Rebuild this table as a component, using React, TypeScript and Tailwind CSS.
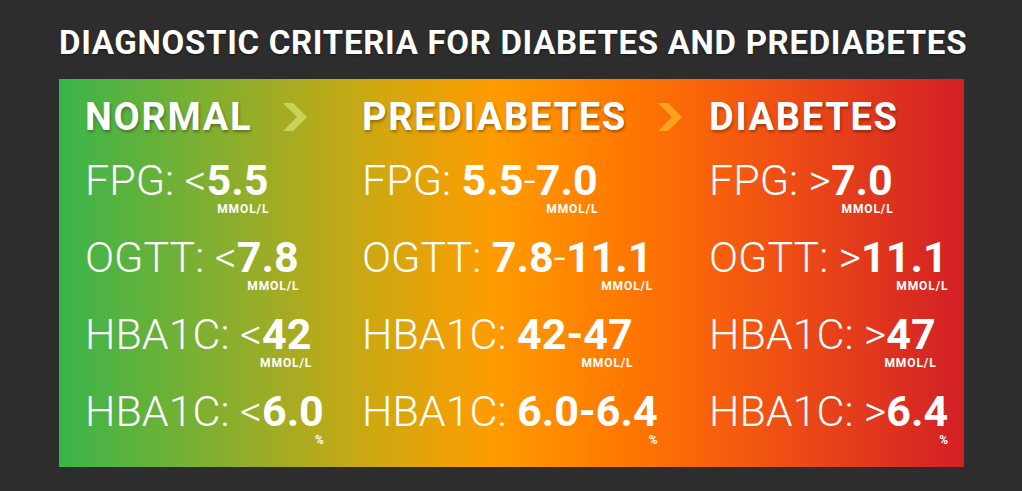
import React from "react";

type Row = { label: string; cmp?: string; value: React.ReactNode; unit: string };

const font = { fontFamily: "Roboto, 'Liberation Sans', sans-serif" };

function Chevron({ color }: { color: string }) {
  return (
    <svg width="24" height="28" viewBox="0 0 24 28" className="shrink-0">
      <polygon points="0,0 10,0 24,14 10,28 0,28 14,14" fill={color} />
    </svg>
  );
}

function Line({ row }: { row: Row }) {
  return (
    <div className="h-[77px] text-white">
      <div className="inline-flex flex-col items-end">
        <div className="flex items-baseline text-[43px] leading-none whitespace-pre">
          <span className="font-light">{row.label}</span>
          {row.cmp && <span className="font-light">{row.cmp}</span>}
          <span className="font-bold">{row.value}</span>
        </div>
        <div className="mt-[1px] text-[12px] leading-none font-bold tracking-[0.9px] mr-[-0.9px]">
          {row.unit}
        </div>
      </div>
    </div>
  );
}

function Column({
  title,
  chevron,
  rows,
}: {
  title: string;
  chevron?: string;
  rows: Row[];
}) {
  return (
    <div className="flex flex-col">
      <div className="flex items-center gap-[31px] h-[38px] mb-[23px]">
        <div className="text-[38px] leading-none font-bold tracking-[1.7px] text-white [text-shadow:1px_2px_3px_rgba(0,0,0,0.35)]">
          {title}
        </div>
        {chevron && <Chevron color={chevron} />}
      </div>
      {rows.map((r, i) => (
        <Line key={i} row={r} />
      ))}
    </div>
  );
}

const thin = (s: string) => <span className="font-light">{s}</span>;

export default function App() {
  return (
    <div className="w-[1022px] h-[491px] bg-[#2d2d2d] overflow-hidden" style={font}>
      <div className="pl-[59px] pt-[26px]">
        <div className="text-[33px] leading-none font-bold tracking-[0.7px] text-white [text-shadow:0_1px_2px_rgba(0,0,0,0.5)] whitespace-nowrap">
          DIAGNOSTIC CRITERIA FOR DIABETES AND PREDIABETES
        </div>
        <div className="mt-[20px] w-[905px] h-[388px] pt-[19px] pl-[26px] bg-[linear-gradient(to_right,#39b54a_0%,#8fae2b_20%,#d4a70f_36%,#ff9c00_48%,#ff7a00_62%,#f45810_76%,#d21f26_100%)]">
          <div className="grid grid-cols-[277px_347px_1fr]">
            <Column
              title="NORMAL"
              chevron="#c9d35a"
              rows={[
                { label: "FPG: ", cmp: "<", value: "5.5", unit: "MMOL/L" },
                { label: "OGTT: ", cmp: "<", value: "7.8", unit: "MMOL/L" },
                { label: "HBA1C: ", cmp: "<", value: "42", unit: "MMOL/L" },
                { label: "HBA1C: ", cmp: "<", value: "6.0", unit: "%" },
              ]}
            />
            <Column
              title="PREDIABETES"
              chevron="#ffa21d"
              rows={[
                { label: "FPG: ", value: <>5.5{thin("-")}7.0</>, unit: "MMOL/L" },
                { label: "OGTT: ", value: <>7.8{thin("-")}11.1</>, unit: "MMOL/L" },
                { label: "HBA1C: ", value: "42-47", unit: "MMOL/L" },
                { label: "HBA1C: ", value: "6.0-6.4", unit: "%" },
              ]}
            />
            <Column
              title="DIABETES"
              rows={[
                { label: "FPG: ", cmp: ">", value: "7.0", unit: "MMOL/L" },
                { label: "OGTT: ", cmp: ">", value: "11.1", unit: "MMOL/L" },
                { label: "HBA1C: ", cmp: ">", value: "47", unit: "MMOL/L" },
                { label: "HBA1C: ", cmp: ">", value: "6.4", unit: "%" },
              ]}
            />
          </div>
        </div>
      </div>
    </div>
  );
}
